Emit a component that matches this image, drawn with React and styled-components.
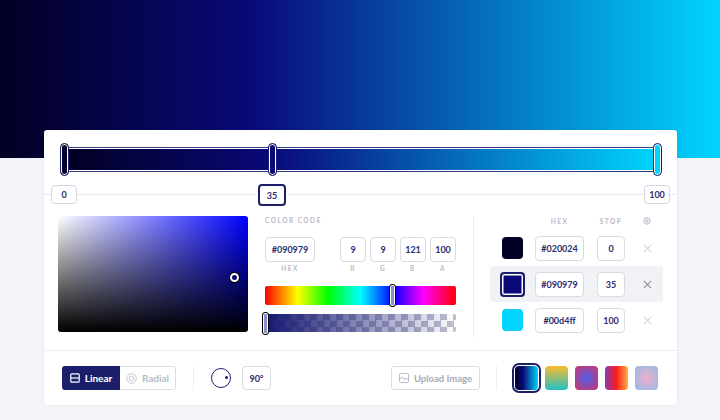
import React from "react";
import styled, { createGlobalStyle } from "styled-components";

const navy = "#1b1f6b";
const gradient = "linear-gradient(90deg, #020024 0%, #090979 35%, #00d4ff 100%)";
const checker = "repeating-conic-gradient(#bfc0d0 0% 25%, #ffffff 0% 50%) 0 0 / 13px 13px";

const GlobalStyle = createGlobalStyle`
  html, body {
    margin: 0;
    padding: 0;
    background: #f3f4f8;
    font-family: "Lato", "Liberation Sans", sans-serif;
  }
  * { box-sizing: border-box; }
`;

const Page = styled.div`
  width: 720px;
  height: 420px;
  overflow: hidden;
`;

const Hero = styled.div`
  height: 158px;
  background: ${gradient};
`;

const Card = styled.div`
  width: 633px;
  height: 275px;
  margin: -28px 0 0 44px;
  background: #fff;
  border-radius: 3px;
  box-shadow: 0 0 2px rgba(40, 40, 90, 0.08);
  display: flex;
  flex-direction: column;
`;

const BarArea = styled.div`
  padding: 17px 18px 0 18px;
`;

const Bar = styled.div`
  position: relative;
  height: 25px;
  border: 1px solid #35377f;
  box-shadow: inset 0 0 0 1px #fff;
  padding: 1px;
  background: ${gradient} content-box;
  margin: 0 1px;
`;

const Handle = styled.span`
  position: absolute;
  top: -5px;
  width: 9px;
  height: 33px;
  margin-left: -4px;
  border: 1.5px solid ${navy};
  border-radius: 5px;
  background: ${(p) => p.$color};
  box-shadow: inset 0 0 0 1px #fff;
`;

const Scale = styled.div`
  position: relative;
  height: 33px;
  &::before {
    content: "";
    position: absolute;
    left: -18px;
    right: -18px;
    top: 22px;
    height: 1px;
    background: #e9ebf0;
  }
`;

const ScaleLabel = styled.span`
  position: absolute;
  top: ${(p) => (p.$active ? "12px" : "13px")};
  transform: translateX(-50%);
  height: ${(p) => (p.$active ? "22px" : "19px")};
  min-width: ${(p) => (p.$active ? "28px" : "26px")};
  padding: 0 3px;
  display: flex;
  align-items: center;
  justify-content: center;
  background: #fff;
  border: ${(p) => (p.$active ? `2px solid ${navy}` : "1px solid #d5d6de")};
  border-radius: 4px;
  font-size: 9px;
  font-weight: 700;
  color: #2b2e70;
`;

const Middle = styled.div`
  flex: 1;
  display: flex;
  padding: 11px 13px 0 14px;
`;

const Picker = styled.div`
  position: relative;
  width: 190px;
  height: 116px;
  border-radius: 3px;
  background: linear-gradient(0deg, #000, rgba(0, 0, 0, 0)),
    linear-gradient(90deg, #fff, #0000ff);
`;

const PickerDot = styled.span`
  position: absolute;
  left: 172px;
  top: 57px;
  width: 9px;
  height: 9px;
  border-radius: 50%;
  background: #090979;
  border: 2px solid #fff;
  box-shadow: 0 0 0 1px #000;
`;

const CodePanel = styled.div`
  width: 191px;
  margin-left: 17px;
  padding-top: 1px;
`;

const SmallCaps = styled.div`
  font-size: 6.5px;
  font-weight: 700;
  letter-spacing: 1.5px;
  color: #b9bac6;
  text-transform: uppercase;
  text-align: ${(p) => p.$align || "center"};
`;

const CodeRow = styled.div`
  display: grid;
  grid-template-columns: 71px 26px 26px 26px 26px;
  column-gap: 4px;
  margin-top: 13px;
`;

const CodeColumn = styled.div`
  display: flex;
  flex-direction: column;
  gap: 3px;
  width: ${(p) => p.$width || 26}px;
`;

const Field = styled.div`
  height: ${(p) => p.$height || 25}px;
  width: ${(p) => p.$width || 26}px;
  display: flex;
  align-items: center;
  justify-content: center;
  background: #fff;
  border: 1px solid #d9dae2;
  border-radius: 4px;
  font-size: 9px;
  font-weight: 700;
  color: #2b2e70;
`;

const Slider = styled.div`
  position: relative;
  height: ${(p) => p.$height}px;
  margin-top: ${(p) => p.$top}px;
  border-radius: 2px;
  background: ${(p) => p.$background};
`;

const SliderThumb = styled.span`
  position: absolute;
  top: -2px;
  width: 7px;
  height: 23px;
  margin-left: -3px;
  border: 1.5px solid #000;
  border-radius: 3px;
  background: #8a8fd0;
  box-shadow: inset 0 0 0 1px #fff;
`;

const Divider = styled.div`
  width: 1px;
  height: 122px;
  background: #eceef2;
  margin: 0 16px 0 17px;
`;

const StopsPanel = styled.div`
  width: 173px;
`;

const StopsHead = styled.div`
  display: grid;
  grid-template-columns: 45px 49px 13px 28px 13px 18px;
  align-items: center;
  height: 10px;
  margin-bottom: 4px;
`;

const StopRow = styled.div`
  display: grid;
  grid-template-columns: 45px 49px 13px 28px 13px 18px;
  align-items: center;
  height: 36px;
  border-radius: 3px;
  background: ${(p) => (p.$active ? "#f1f2f6" : "transparent")};
`;

const Swatch = styled.span`
  justify-self: center;
  border-radius: 4px;
  width: ${(p) => (p.$active ? "25px" : "21px")};
  height: ${(p) => (p.$active ? "25px" : "22px")};
  background: ${(p) => p.$color};
  border: ${(p) => (p.$active ? `2px solid ${navy}` : "none")};
  box-shadow: ${(p) => (p.$active ? "inset 0 0 0 1.5px #fff" : "none")};
`;

const Remove = styled.svg`
  justify-self: center;
  width: 9px;
  height: 9px;
  stroke: ${(p) => (p.$active ? "#8b8d9e" : "#d4d5dd")};
  stroke-width: 1.2;
`;

const Footer = styled.div`
  height: 55px;
  margin-top: auto;
  border-top: 1px solid #eceef2;
  display: flex;
  align-items: center;
  padding: 0 19px 0 18px;
`;

const Segmented = styled.div`
  display: flex;
  height: 24px;
`;

const Segment = styled.div`
  width: ${(p) => (p.$active ? "58px" : "56px")};
  display: flex;
  align-items: center;
  justify-content: center;
  gap: 5px;
  font-size: 10px;
  font-weight: 700;
  color: ${(p) => (p.$active ? "#fff" : "#b9bac6")};
  background: ${(p) => (p.$active ? navy : "#fff")};
  border: ${(p) => (p.$active ? "none" : "1px solid #dcdde4")};
  border-left: none;
  border-radius: ${(p) => (p.$active ? "3px 0 0 3px" : "0 3px 3px 0")};
`;

const VerticalRule = styled.div`
  width: 1px;
  height: 24px;
  background: #eceef2;
  margin: ${(p) => p.$margin};
`;

const AngleDial = styled.div`
  position: relative;
  width: 20px;
  height: 20px;
  border: 1.5px solid ${navy};
  border-radius: 50%;
  margin-right: 11px;
  &::after {
    content: "";
    position: absolute;
    right: 2px;
    top: 6.5px;
    width: 3.5px;
    height: 3.5px;
    border-radius: 50%;
    background: ${navy};
  }
`;

const UploadButton = styled.div`
  width: 89px;
  height: 24px;
  margin-left: auto;
  display: flex;
  align-items: center;
  justify-content: center;
  gap: 5px;
  border: 1px solid #d9dae2;
  border-radius: 3px;
  font-size: 9.5px;
  font-weight: 700;
  color: #a9aab8;
`;

const Presets = styled.div`
  display: flex;
  gap: 7px;
  align-items: center;
`;

const Preset = styled.div`
  width: 23px;
  height: 24px;
  border-radius: 4px;
  background: ${(p) => p.$background};
  ${(p) =>
    p.$active &&
    `outline: 2px solid ${navy}; outline-offset: 1px; box-shadow: 0 0 0 1px #fff;`}
`;

const stops = [
  { hex: "#020024", stop: 0 },
  { hex: "#090979", stop: 35, active: true },
  { hex: "#00d4ff", stop: 100 },
];

const presets = [
  "linear-gradient(90deg, #020024, #090979 35%, #00d4ff)",
  "linear-gradient(180deg, #fdbb2d, #22c1c3)",
  "radial-gradient(circle, #4a5fe8, #d53369)",
  "linear-gradient(90deg, #833ab4, #fd1d1d 50%, #fcb045)",
  "radial-gradient(circle, #eeaeca, #94bbe9)",
];

function Cross({ active }) {
  return (
    <Remove $active={active} viewBox="0 0 10 10" fill="none">
      <path d="M1 1l8 8M9 1l-8 8" />
    </Remove>
  );
}

export default function App() {
  return (
    <Page>
      <GlobalStyle />
      <Hero />
      <Card>
        <BarArea>
          <Bar>
            <Handle $color="#020024" style={{ left: "0%" }} />
            <Handle $color="#090979" style={{ left: "35%" }} />
            <Handle $color="#00d4ff" style={{ left: "100%" }} />
          </Bar>
          <Scale>
            <ScaleLabel style={{ left: "2px" }}>0</ScaleLabel>
            <ScaleLabel $active style={{ left: "210px" }}>35</ScaleLabel>
            <ScaleLabel style={{ left: "595px" }}>100</ScaleLabel>
          </Scale>
        </BarArea>
        <Middle>
          <Picker>
            <PickerDot />
          </Picker>
          <CodePanel>
            <SmallCaps $align="left">Color code</SmallCaps>
            <CodeRow>
              <CodeColumn $width={50}>
                <Field $width={50}>#090979</Field>
                <SmallCaps>Hex</SmallCaps>
              </CodeColumn>
              {[["9", "R"], ["9", "G"], ["121", "B"], ["100", "A"]].map(([value, label]) => (
                <CodeColumn key={label}>
                  <Field>{value}</Field>
                  <SmallCaps>{label}</SmallCaps>
                </CodeColumn>
              ))}
            </CodeRow>
            <Slider
              $top={14}
              $height={19}
              $background="linear-gradient(90deg, #f00 0%, #ff0 17%, #0f0 33%, #0ff 50%, #00f 67%, #f0f 83%, #f00 100%)"
            >
              <SliderThumb style={{ left: "66.5%" }} />
            </Slider>
            <Slider
              $top={9}
              $height={18}
              $background={`linear-gradient(90deg, #14176f, rgba(20, 23, 111, 0)), ${checker}`}
            >
              <SliderThumb style={{ left: "0%" }} />
            </Slider>
          </CodePanel>
          <Divider />
          <StopsPanel>
            <StopsHead>
              <span />
              <SmallCaps>Hex</SmallCaps>
              <span />
              <SmallCaps>Stop</SmallCaps>
              <span />
              <svg width="8" height="8" viewBox="0 0 8 8" fill="none" stroke="#b9bac6" style={{ justifySelf: "center" }}>
                <circle cx="4" cy="4" r="3.2" />
                <path d="M4 1.5v5M1.5 4h5" />
              </svg>
            </StopsHead>
            {stops.map((s) => (
              <StopRow key={s.hex} $active={s.active}>
                <Swatch $color={s.hex} $active={s.active} />
                <Field $width={49}>{s.hex}</Field>
                <span />
                <Field $width={28}>{s.stop}</Field>
                <span />
                <Cross active={s.active} />
              </StopRow>
            ))}
          </StopsPanel>
        </Middle>
        <Footer>
          <Segmented>
            <Segment $active>
              <svg width="10" height="10" viewBox="0 0 10 10" fill="none" stroke="#fff" strokeWidth="1.2">
                <rect x="0.8" y="0.8" width="8.4" height="8.4" rx="1" />
                <path d="M1 5h8" />
              </svg>
              Linear
            </Segment>
            <Segment>
              <svg width="11" height="11" viewBox="0 0 11 11" fill="none" stroke="#c5c6d0">
                <circle cx="5.5" cy="5.5" r="4.8" />
                <circle cx="5.5" cy="5.5" r="2.4" />
              </svg>
              Radial
            </Segment>
          </Segmented>
          <VerticalRule $margin="0 17px 0 17px" />
          <AngleDial />
          <Field $width={29} $height={24}>90°</Field>
          <UploadButton>
            <svg width="10" height="10" viewBox="0 0 10 10" fill="none" stroke="#b5b6c3" strokeWidth="0.9">
              <rect x="0.5" y="0.5" width="9" height="9" rx="1" />
              <path d="M0.8 6l2.5-2 3 3.2M5.5 6.4l1.5-1.2 2.5 2" />
            </svg>
            Upload Image
          </UploadButton>
          <VerticalRule $margin="0 18px 0 16px" />
          <Presets>
            {presets.map((background, i) => (
              <Preset key={background} $background={background} $active={i === 0} />
            ))}
          </Presets>
        </Footer>
      </Card>
    </Page>
  );
}
